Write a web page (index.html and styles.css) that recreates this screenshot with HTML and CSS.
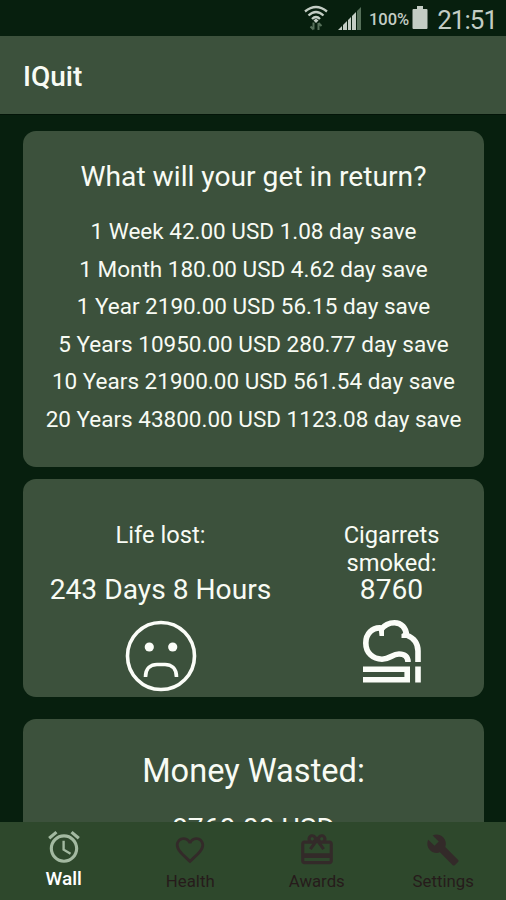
FILE: index.html
```html
<!DOCTYPE html>
<html lang="en">
  <head>
    <meta charset="UTF-8" />
    <title>IQuit</title>
    <meta name="viewport" content="width=device-width, initial-scale=1" />
    <link rel="stylesheet" href="styles.css">
  </head>
  <body>
    <div class="status-bar">
      <svg class="wifi" width="24" height="26" viewBox="0 0 24 26" fill="none">
        <path d="M1 6.500Q12-2.500 23 6.500M4.500 10.500Q12 3.500 19.500 10.500M8 14Q12 10 16 14" stroke="#c3cdc4" stroke-width="2.300" />
        <path d="M12 13.500l2.500 2-2.500 2.500-2.500-2.500z" fill="#c3cdc4" />
        <path d="M9.500 17.500v7M6.500 21.500l3 3M14.500 25v-7M17.500 21L14.500 18" stroke="#56705a" stroke-width="2" />
      </svg>
      <svg class="signal" width="24" height="23" viewBox="0 0 24 23">
        <path d="M0 23l4-4v4zM5 23v-5l4-4v9zM10 23V13l3-3v13zM14 23V9l4-4v18z" fill="#c3cdc4" />
        <path d="M19 23V4l4-4v23z" fill="#56705a" />
      </svg>
      <span class="battery-text">100%</span>
      <svg class="battery" width="16" height="23" viewBox="0 0 16 23">
        <path d="M5 0h6v3h3.500q1 0 1 1v18q0 1-1 1h-13q-1 0-1-1V4q0-1 1-1H5z" fill="#c3cdc4" />
      </svg>
      <span class="clock">21:51</span>
    </div>

    <header class="app-bar">
      <h1>IQuit</h1>
    </header>

    <main class="content">
      <section class="card returns">
        <h2>What will your get in return?</h2>
        <ul>
          <li>1 Week 42.00 USD 1.08 day save</li>
          <li>1 Month 180.00 USD 4.62 day save</li>
          <li>1 Year 2190.00 USD 56.15 day save</li>
          <li>5 Years 10950.00 USD 280.77 day save</li>
          <li>10 Years 21900.00 USD 561.54 day save</li>
          <li>20 Years 43800.00 USD 1123.08 day save</li>
        </ul>
      </section>

      <section class="card stats">
        <div class="stat life">
          <div class="label">Life lost:</div>
          <div class="value">243 Days 8 Hours</div>
          <svg width="72" height="72" viewBox="0 0 72 72" fill="none" stroke="#fbfdf8" stroke-width="3.600">
            <circle cx="36" cy="36" r="33.500" />
            <circle cx="24.300" cy="27" r="4.600" fill="#fbfdf8" stroke="none" />
            <circle cx="47.700" cy="27" r="4.600" fill="#fbfdf8" stroke="none" />
            <path d="M20.500 57C20.500 48 26 44.500 32 44.500h8c6 0 11.500 3.500 11.500 12.500" />
          </svg>
        </div>
        <div class="stat smoked">
          <div class="label">Cigarrets smoked:</div>
          <div class="value">8760</div>
          <svg width="58" height="64" viewBox="0 0 58 64" fill="none" stroke="#fbfdf8" stroke-width="5.600">
            <path d="M18.500 8C9 7 2.800 14 2.800 23C2.800 33 10 39.200 19 39.200C27 39.200 29 34 36 34C42 34 45 37 45 42" />
            <path d="M18 9.500C21.500 5 26 2.800 31.500 2.800C38.500 2.800 43 8 43.500 15C51 18 55 24 55 31V42" />
            <path d="M15.500 6.500L21 10V16H16.500zM44 11L38.500 14V18H45z" fill="#fbfdf8" stroke="none" />
            <path d="M0 49.300h44.200v10.400H0M55 46.500v16" />
          </svg>
        </div>
      </section>

      <section class="card money">
        <h2>Money Wasted:</h2>
        <div class="value">8760.00 USD</div>
      </section>
    </main>

    <nav class="tab-bar">
      <a class="tab active">
        <svg width="38" height="38" viewBox="0 0 24 24"><path d="M22 5.720l-4.600-3.860-1.290 1.530 4.600 3.860L22 5.720zM7.880 3.390L6.600 1.860 2 5.710l1.290 1.530 4.590-3.850zM12.500 8H11v6l4.750 2.850.75-1.230-4-2.370V8zM12 4c-4.970 0-9 4.030-9 9s4.020 9 9 9c4.970 0 9-4.030 9-9s-4.030-9-9-9zm0 16c-3.870 0-7-3.130-7-7s3.130-7 7-7 7 3.130 7 7-3.130 7-7 7z" /></svg>
        <span>Wall</span>
      </a>
      <a class="tab">
        <svg width="34" height="34" viewBox="0 0 24 24"><path d="M16.500 3c-1.740 0-3.410.81-4.500 2.090C10.910 3.810 9.240 3 7.500 3 4.420 3 2 5.420 2 8.500c0 3.780 3.400 6.860 8.550 11.540L12 21.350l1.450-1.320C18.600 15.360 22 12.280 22 8.500 22 5.420 19.580 3 16.500 3zm-4.400 15.550l-.1.100-.1-.1C7.140 14.240 4 11.390 4 8.500 4 6.500 5.500 5 7.500 5c1.540 0 3.040.99 3.570 2.360h1.870C13.460 5.990 14.960 5 16.500 5c2 0 3.500 1.500 3.500 3.500 0 2.890-3.140 5.740-7.900 10.050z" /></svg>
        <span>Health</span>
      </a>
      <a class="tab">
        <svg width="38" height="38" viewBox="0 0 24 24"><path d="M20 6h-2.180c.11-.31.180-.65.180-1 0-1.660-1.340-3-3-3-1.050 0-1.960.54-2.500 1.350l-.5.670-.5-.68C10.960 2.540 10.050 2 9 2 7.340 2 6 3.340 6 5c0 .35.070.69.180 1H4c-1.110 0-1.990.89-1.990 2L2 19c0 1.110.89 2 2 2h16c1.110 0 2-.89 2-2V8c0-1.110-.89-2-2-2zm-5-2c.55 0 1 .45 1 1s-.45 1-1 1-1-.45-1-1 .45-1 1-1zM9 4c.55 0 1 .45 1 1s-.45 1-1 1-1-.45-1-1 .45-1 1-1zm11 15H4v-2h16v2zm0-5H4V8h5.080L7 10.830 8.620 12 11 8.760l1-1.360 1 1.360L15.380 12 17 10.830 14.920 8H20v6z" /></svg>
        <span>Awards</span>
      </a>
      <a class="tab">
        <svg width="34" height="34" viewBox="0 0 24 24"><path d="M22.700 19l-9.100-9.100c.9-2.300.4-5-1.500-6.900-2-2-5-2.400-7.400-1.300L9 6 6 9 1.600 4.700C.4 7.100.9 10.100 2.900 12.100c1.900 1.900 4.600 2.400 6.900 1.500l9.100 9.100c.4.400 1 .4 1.400 0l2.300-2.300c.5-.4.5-1.100.1-1.400z" /></svg>
        <span>Settings</span>
      </a>
    </nav>
  </body>
</html>
```
FILE: styles.css
```css
* {
  box-sizing: border-box;
}

body {
  margin: 0;
  height: 900px;
  display: flex;
  flex-direction: column;
  overflow: hidden;
  background: #071f0e;
  color: #f8fbf4;
  font-family: Roboto, sans-serif;
}

h1,
h2,
ul {
  margin: 0;
  padding: 0;
  font-weight: 400;
}

.status-bar {
  flex: none;
  height: 36px;
  display: flex;
  align-items: center;
  justify-content: flex-end;
  padding-right: 9px;
  color: #c3cdc4;
}

.wifi {
  margin-right: 10px;
}

.battery-text {
  margin: 2px 3px 0 7px;
  font-size: 16.5px;
  font-weight: 500;
}

.battery {
  margin-bottom: 1px;
}

.clock {
  margin: 3px 0 0 9px;
  font-size: 26px;
  line-height: 30px;
  letter-spacing: -1px;
}

.app-bar {
  flex: none;
  height: 79px;
  display: flex;
  align-items: center;
  padding: 3px 23px 0;
  background: #3c513c;
  border-bottom: 1px solid #031408;
}

.app-bar h1 {
  font-size: 28px;
  font-weight: 500;
}

.content {
  flex: 1;
  min-height: 0;
  padding: 16px 22px 0 23px;
  overflow: hidden;
}

.card {
  background: #3c513c;
  border-radius: 13px;
  text-align: center;
}

.returns {
  height: 336px;
  padding-top: 27px;
}

.returns h2 {
  font-size: 28.2px;
  line-height: 38px;
}

.returns ul {
  margin-top: 17px;
  list-style: none;
  font-size: 22.5px;
  line-height: 37.5px;
}

.stats {
  display: flex;
  height: 218px;
  margin-top: 12px;
  padding-top: 42px;
}

.stat {
  display: flex;
  flex-direction: column;
  align-items: center;
}

.life {
  width: 275px;
}

.smoked {
  width: 186px;
  padding-left: 1px;
}

.stat .label {
  width: 130px;
  height: 52px;
  font-size: 23.7px;
  line-height: 28px;
}

.stat .value {
  font-size: 28.2px;
  line-height: 34px;
}

.life svg {
  margin-top: 13px;
}

.smoked svg {
  margin-top: 13px;
}

.money {
  height: 200px;
  margin-top: 22px;
  padding-top: 32px;
}

.money h2 {
  font-size: 32.6px;
  line-height: 40px;
}

.money .value {
  margin-top: 21px;
  font-size: 28.2px;
  line-height: 34px;
}

.tab-bar {
  flex: none;
  height: 78px;
  display: grid;
  grid-template-columns: repeat(4, 1fr);
  background: #2e482c;
}

.tab {
  display: flex;
  flex-direction: column;
  align-items: center;
  justify-content: flex-end;
  gap: 4px;
  padding: 0 0 9px 1px;
  color: #261b1b;
  font-size: 16.8px;
  line-height: 20px;
}

.tab svg {
  fill: #332a29;
}

.tab:nth-child(3) {
  gap: 2px;
}

.tab.active {
  gap: 3px;
  color: #fff;
  font-size: 19px;
  font-weight: 500;
  padding-bottom: 11px;
}

.tab.active svg {
  fill: #a3b9a1;
}
```
